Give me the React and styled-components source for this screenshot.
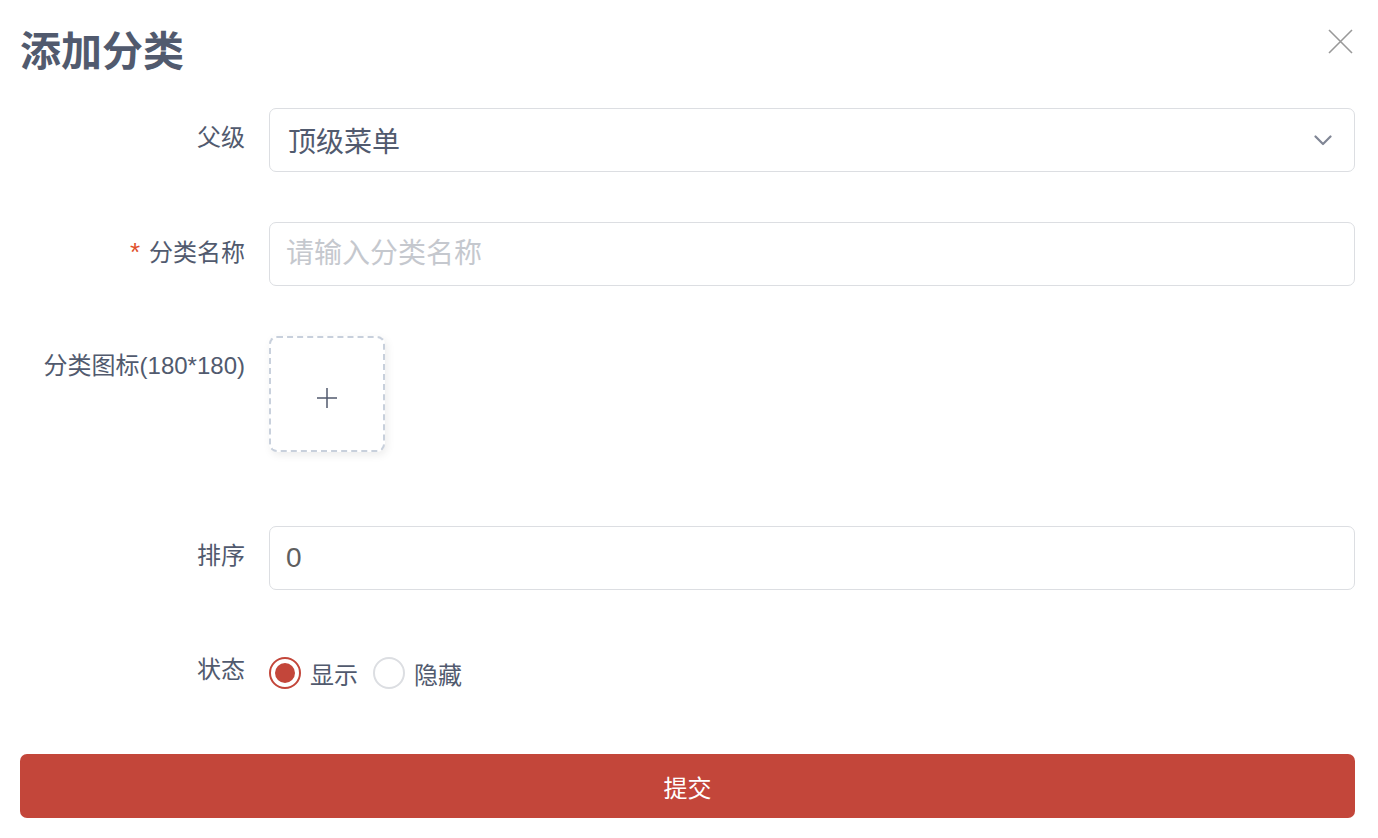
import React from "react";
import styled, { createGlobalStyle } from "styled-components";

const GlobalStyle = createGlobalStyle`
    body {
        margin: 0;
        background: #fff;
        font-family: "Liberation Sans", "Noto Sans CJK SC", sans-serif;
        color: #515a6e;
    }
    * {
        box-sizing: border-box;
    }
`;

// Modal body
export const Modal = styled.section`
    width: 1378px;
    height: 838px;
    padding: 0 23px 0 20px;
    background: #fff;
`;

// Header
export const Header = styled.header`
    display: flex;
    justify-content: space-between;
    align-items: flex-start;
    padding-top: 28px;
    height: 108px;
`;

export const Title = styled.h2`
    margin: 0;
    font-size: 41px;
    line-height: 48px;
    font-weight: 700;
    color: #515a6e;
`;

export const Close = styled.button`
    width: 26px;
    height: 26px;
    margin-right: 2px;
    padding: 0;
    border: none;
    background: none;
    cursor: pointer;
    display: flex;
    align-items: center;
    justify-content: center;
`;

// Form
export const Form = styled.form`
    display: flex;
    flex-direction: column;
`;

export const Row = styled.div`
    display: grid;
    grid-template-columns: 249px 1fr;
    margin-bottom: ${(p) => p.$gap || 50}px;
`;

export const Label = styled.label`
    padding: 18px 24px 0 0;
    font-size: 24px;
    line-height: 24px;
    text-align: right;
    color: #515a6e;
    white-space: nowrap;
`;

export const Star = styled.span`
    color: #e0502c;
    font-size: 26px;
    margin-right: 9px;
`;

export const Field = styled.div`
    height: 64px;
    border: 1px solid #dcdee2;
    border-radius: 7px;
    display: flex;
    align-items: center;
    padding: 0 22px 0 18px;
    font-size: 28px;
    color: #515a6e;
`;

export const SelectText = styled.span`
    flex: 1;
`;

export const Input = styled.input`
    height: 64px;
    width: 100%;
    border: 1px solid #dcdee2;
    border-radius: 7px;
    padding: 0 16px;
    font-family: inherit;
    font-size: 28px;
    color: #5f5f5f;
    outline: none;

    &::placeholder {
        color: #c5c8ce;
    }
`;

export const Upload = styled.div`
    width: 116px;
    height: 116px;
    padding-top: 8px;
    border: 2px dashed #c8d0dc;
    border-radius: 8px;
    background: #fff;
    box-shadow: 2px 3px 8px rgba(0, 0, 0, 0.08);
    display: flex;
    align-items: center;
    justify-content: center;
    cursor: pointer;
`;

// Radio
export const RadioGroup = styled.div`
    height: 64px;
    display: flex;
    align-items: center;
    gap: 15px;
    padding-top: 2px;
`;

export const Radio = styled.label`
    display: flex;
    align-items: center;
    gap: 9px;
    font-size: 24px;
    color: #515a6e;
    cursor: pointer;
`;

export const Circle = styled.span`
    width: 32px;
    height: 32px;
    border-radius: 50%;
    border: 2px solid ${(p) => (p.$on ? "#c3463a" : "#dcdee2")};
    display: flex;
    align-items: center;
    justify-content: center;

    &::after {
        content: "";
        width: 20px;
        height: 20px;
        border-radius: 50%;
        background: ${(p) => (p.$on ? "#c3463a" : "transparent")};
    }
`;

export const Submit = styled.button`
    height: 64px;
    width: 100%;
    border: none;
    border-radius: 7px;
    background: #c3463a;
    color: #fff;
    font-family: inherit;
    font-size: 24px;
    cursor: pointer;
`;

export default function App() {
    return (
        <>
            <GlobalStyle />
            <Modal>
                <Header>
                    <Title>添加分类</Title>
                    <Close type="button" aria-label="close">
                        <svg width="25" height="25" viewBox="0 0 25 25">
                            <path d="M1 1L24 24M24 1L1 24" stroke="#999" strokeWidth="1.6" fill="none" />
                        </svg>
                    </Close>
                </Header>
                <Form onSubmit={(e) => e.preventDefault()}>
                    <Row>
                        <Label>父级</Label>
                        <Field>
                            <SelectText>顶级菜单</SelectText>
                            <svg width="18" height="11" viewBox="0 0 18 11">
                                <path d="M1.5 1.5L9 9L16.5 1.5" stroke="#808695" strokeWidth="2.2" fill="none" strokeLinecap="round" strokeLinejoin="round" />
                            </svg>
                        </Field>
                    </Row>
                    <Row>
                        <Label>
                            <Star>*</Star>分类名称
                        </Label>
                        <Input placeholder="请输入分类名称" />
                    </Row>
                    <Row $gap={74}>
                        <Label>分类图标(180*180)</Label>
                        <Upload>
                            <svg width="22" height="22" viewBox="0 0 22 22">
                                <path d="M11 1V21M1 11H21" stroke="#515a6e" strokeWidth="1.5" fill="none" />
                            </svg>
                        </Upload>
                    </Row>
                    <Row>
                        <Label>排序</Label>
                        <Input defaultValue="0" />
                    </Row>
                    <Row>
                        <Label>状态</Label>
                        <RadioGroup>
                            <Radio>
                                <Circle $on />
                                显示
                            </Radio>
                            <Radio>
                                <Circle />
                                隐藏
                            </Radio>
                        </RadioGroup>
                    </Row>
                    <Submit type="submit">提交</Submit>
                </Form>
            </Modal>
        </>
    );
}
